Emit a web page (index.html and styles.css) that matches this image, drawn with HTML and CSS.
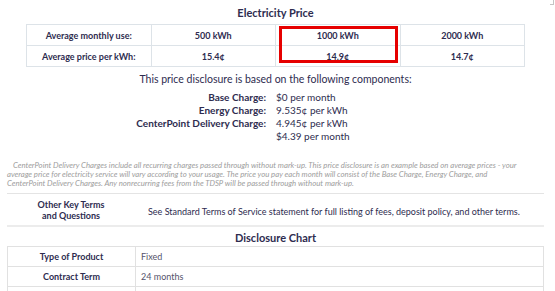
FILE: index.html
```html
<!DOCTYPE html>
<html>
<head>
    <title>Electricity Facts Label</title>
    <link rel="stylesheet" href="styles.css">
</head>
<body>
    <span class="corner"></span>
    <div class="page">
        <h2 class="title">Electricity Price</h2>

        <div class="price-wrap">
            <table class="price-table">
                <tr>
                    <th>Average monthly use:</th>
                    <td>500 kWh</td>
                    <td>1000 kWh</td>
                    <td>2000 kWh</td>
                </tr>
                <tr>
                    <th>Average price per kWh:</th>
                    <td>15.4&cent;</td>
                    <td>14.9&cent;</td>
                    <td>14.7&cent;</td>
                </tr>
            </table>
            <div class="highlight"></div>
        </div>

        <p class="lead">This price disclosure is based on the following components:</p>

        <div class="components">
            <span class="label">Base Charge:</span>
            <span class="value">$0 per month</span>
            <span class="label">Energy Charge:</span>
            <span class="value">9.535&cent; per kWh</span>
            <span class="label">CenterPoint Delivery Charge:</span>
            <span class="value">4.945&cent; per kWh</span>
            <span class="label"></span>
            <span class="value">$4.39 per month</span>
        </div>

        <p class="note">CenterPoint Delivery Charges include all recurring charges passed through without mark-up. This price disclosure is an example based on average prices - your<br>
        average price for electricity service will vary according to your usage. The price you pay each month will consist of the Base Charge, Energy Charge, and<br>
        CenterPoint Delivery Charges. Any nonrecurring fees from the TDSP will be passed through without mark-up.</p>

        <div class="terms">
            <div class="terms-label">Other Key Terms<br>and Questions</div>
            <div class="terms-text">See Standard Terms of Service statement for full listing of fees, deposit policy, and other terms.</div>
        </div>

        <h3 class="chart-title">Disclosure Chart</h3>
        <table class="chart">
            <tr>
                <th>Type of Product</th>
                <td>Fixed</td>
            </tr>
            <tr>
                <th>Contract Term</th>
                <td>24 months</td>
            </tr>
            <tr>
                <th></th>
                <td></td>
            </tr>
        </table>
    </div>
</body>
</html>
```

FILE: styles.css
```css
body {
    margin: 0;
    font-family: Lato, "Noto Sans", sans-serif;
    color: #2e2c4f;
    background-color: #fff;
    overflow: hidden;
}

.corner {
    position: absolute;
    top: -1px;
    right: 1px;
    width: 3px;
    height: 5px;
    border-right: 1px solid #c4c4c4;
    border-bottom: 1px solid #c4c4c4;
}

.page {
    width: 537px;
    margin-left: 7px;
}

.title {
    margin: 6px 0 4px;
    font-size: 11px;
    line-height: 14px;
    text-align: center;
}

.price-wrap {
    position: relative;
    width: 499px;
    margin: 0 auto;
}

.price-table {
    width: 100%;
    border-collapse: collapse;
    table-layout: fixed;
}

.price-table th,
.price-table td {
    border: 1px solid #dde3e8;
    padding: 0;
    height: 20px;
    font-size: 9px;
    font-weight: bold;
    text-align: center;
}

.highlight {
    position: absolute;
    left: 253px;
    top: 2px;
    width: 113px;
    height: 31px;
    border: 3px solid #e60000;
}

.lead {
    margin: 5px 0 5px;
    font-size: 10.5px;
    line-height: 14px;
    text-align: center;
}

.components {
    display: grid;
    grid-template-columns: 259px auto;
    column-gap: 10px;
    font-size: 10px;
    line-height: 13px;
}

.components .label {
    font-weight: bold;
    text-align: right;
}

.note {
    margin: 18px 0 0;
    padding: 0 0 5px 0;
    text-indent: 6px;
    font-size: 7.75px;
    line-height: 9px;
    font-style: italic;
    color: #9d9d9d;
    border-bottom: 1px solid #e4e4e4;
}

.terms {
    display: flex;
    align-items: center;
    height: 31px;
    border-bottom: 2px solid #ececec;
}

.terms-label {
    width: 128px;
    font-size: 9px;
    font-weight: bold;
    line-height: 11px;
    text-align: center;
}

.terms-text {
    padding: 3px 0 0 13px;
    font-size: 9px;
}

.chart-title {
    margin: 3px 0 0;
    font-size: 11px;
    line-height: 15px;
    text-align: center;
}

.chart {
    width: 100%;
    margin-top: 1px;
    border-collapse: collapse;
    table-layout: fixed;
}

.chart th,
.chart td {
    border: 1px solid #e1e1e1;
    height: 19px;
    padding: 0;
    font-size: 9px;
}

.chart th {
    width: 127px;
    text-align: center;
}

.chart td {
    padding-left: 5px;
    color: #55536b;
}
```
